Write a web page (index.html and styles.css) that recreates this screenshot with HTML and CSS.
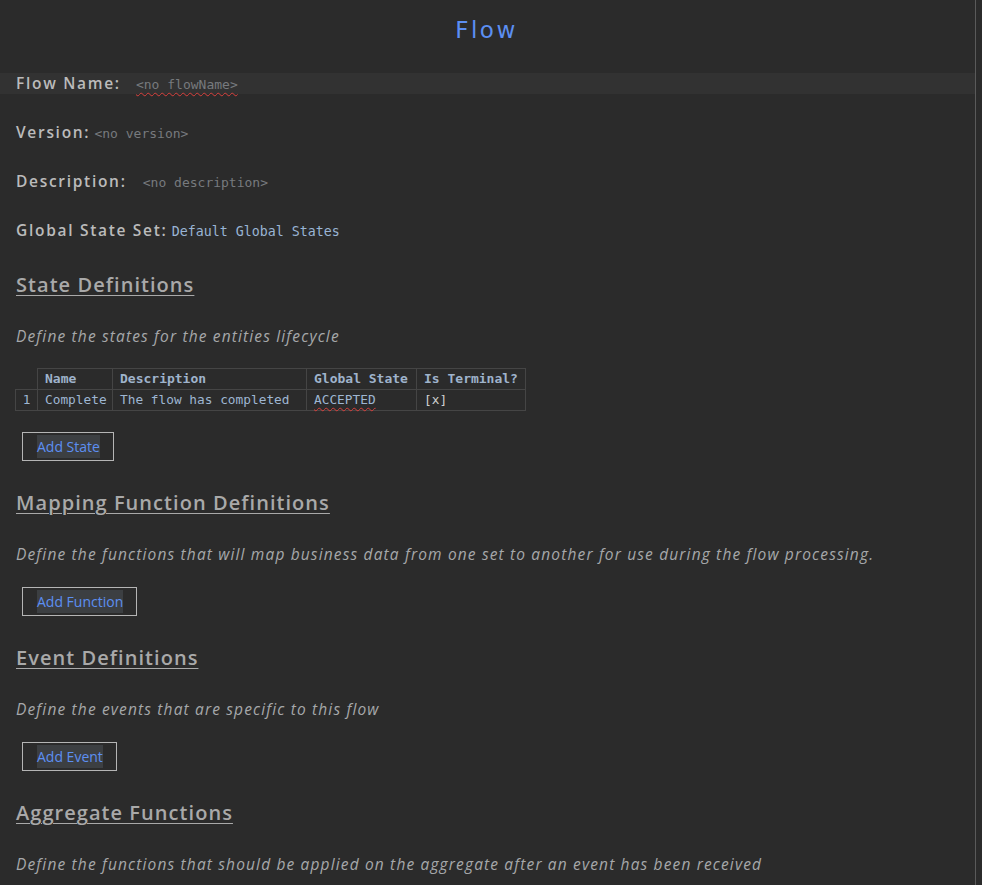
FILE: index.html
```html
<!DOCTYPE html>
<html lang="en">
<head>
    <meta charset="UTF-8">
    <meta name="viewport" content="width=device-width, initial-scale=1.0">
    <title>Flow</title>
    <link rel="stylesheet" href="styles.css">
</head>
<body>
    <div class="editor">
        <h1 class="title">Flow</h1>

        <div class="field field-current">
            <span class="label">Flow Name:</span>
            <span class="value empty misspelt name-value">&lt;no flowName&gt;</span>
        </div>
        <div class="field">
            <span class="label">Version:</span>
            <span class="value empty">&lt;no version&gt;</span>
        </div>
        <div class="field">
            <span class="label">Description:</span>
            <span class="value empty desc-value">&lt;no description&gt;</span>
        </div>
        <div class="field">
            <span class="label">Global State Set:</span>
            <span class="value ref">Default Global States</span>
        </div>

        <div class="section">
            <h2 class="section-title">State Definitions</h2>
            <p class="section-desc">Define the states for the entities lifecycle</p>
            <table class="states">
                <colgroup>
                    <col class="col-num">
                    <col class="col-name">
                    <col class="col-desc">
                    <col class="col-global">
                    <col class="col-terminal">
                </colgroup>
                <thead>
                    <tr>
                        <th class="blank"></th>
                        <th>Name</th>
                        <th>Description</th>
                        <th>Global State</th>
                        <th>Is Terminal?</th>
                    </tr>
                </thead>
                <tbody>
                    <tr>
                        <td class="num">1</td>
                        <td>Complete</td>
                        <td>The flow has completed</td>
                        <td><span class="misspelt">ACCEPTED</span></td>
                        <td class="flag">[x]</td>
                    </tr>
                </tbody>
            </table>
            <button class="add-btn"><span>Add State</span></button>
        </div>

        <div class="section">
            <h2 class="section-title">Mapping Function Definitions</h2>
            <p class="section-desc">Define the functions that will map business data from one set to another for use during the flow processing.</p>
            <button class="add-btn"><span>Add Function</span></button>
        </div>

        <div class="section">
            <h2 class="section-title">Event Definitions</h2>
            <p class="section-desc">Define the events that are specific to this flow</p>
            <button class="add-btn"><span>Add Event</span></button>
        </div>

        <div class="section">
            <h2 class="section-title">Aggregate Functions</h2>
            <p class="section-desc">Define the functions that should be applied on the aggregate after an event has been received</p>
        </div>
    </div>
</body>
</html>
```

FILE: styles.css
```css
body {
    margin: 0;
    background-color: #2b2b2b;
    font-family: "Open Sans", sans-serif;
    color: #bbbbbb;
}

.editor {
    width: 975px;
    min-height: 885px;
    border-right: 1px solid #5a5a5a;
    box-sizing: content-box;
}

.title {
    margin: 0 0 15px 0;
    height: 60px;
    line-height: 60px;
    text-align: center;
    font-family: "DejaVu Sans", sans-serif;
    font-size: 23px;
    font-weight: normal;
    letter-spacing: 2.5px;
    color: #5c8ff2;
    padding-right: 2px;
}

.field {
    height: 21px;
    line-height: 21px;
    padding-left: 16px;
    margin-bottom: 28px;
    white-space: nowrap;
}

.title + .field {
    margin-top: -2px;
}

.field-current {
    background-color: #323232;
}

.label {
    font-size: 15.5px;
    font-weight: 600;
    letter-spacing: 1.7px;
    color: #bbbbbb;
}

.value {
    font-family: "DejaVu Sans Mono", monospace;
    font-size: 13px;
}

.empty {
    color: #777a7e;
}

.name-value {
    margin-left: 11px;
}

.desc-value {
    margin-left: 12px;
}

.ref {
    font-size: 13.3px;
    color: #99b4d4;
}

.misspelt {
    text-decoration: underline wavy #d9403c;
    text-decoration-thickness: 1px;
    text-underline-offset: 3px;
}

.section {
    padding-left: 16px;
    margin-top: 32px;
}

.section + .section {
    margin-top: 30px;
}

.section-title {
    margin: 0;
    height: 24px;
    line-height: 24px;
    font-size: 20px;
    font-weight: 600;
    letter-spacing: 1.05px;
    color: #a9a9a9;
    text-decoration: underline;
    text-decoration-thickness: 1px;
    text-underline-offset: 3px;
}

.section-desc {
    margin: 29px 0 0 0;
    height: 21px;
    line-height: 21px;
    font-size: 15.5px;
    font-style: italic;
    letter-spacing: 1.15px;
    color: #a6a8aa;
    white-space: nowrap;
}

.states {
    margin: 21px 0 0 -1px;
    border-collapse: collapse;
    table-layout: fixed;
    font-family: "DejaVu Sans Mono", monospace;
    font-size: 12.8px;
    color: #9eb6d2;
}

.col-num { width: 22px; }
.col-name { width: 75px; }
.col-desc { width: 194px; }
.col-global { width: 110px; }
.col-terminal { width: 109px; }

.states th,
.states td {
    height: 20px;
    padding: 0 0 0 7px;
    border: 1px solid #454545;
    text-align: left;
    white-space: nowrap;
    line-height: 20px;
}

.states th {
    font-weight: bold;
    font-size: 13px;
    color: #9fb3cb;
}

.states th.blank {
    border: none;
    border-bottom: 1px solid #454545;
}

.states td.num {
    text-align: center;
    padding: 0;
}

.states td.flag {
    color: #cfcfcf;
}

.add-btn {
    display: block;
    margin: 21px 0 0 6px;
    padding: 2px 13px 2px 14px;
    height: 29px;
    background: transparent;
    border: 1px solid #b5b5b5;
    font-family: "Open Sans", sans-serif;
    font-size: 14px;
    color: #5c8ff2;
    cursor: pointer;
}

.add-btn span {
    display: block;
    height: 23px;
    line-height: 24px;
    background-color: #3c3f42;
}

.section-desc + .add-btn {
    margin-top: 22px;
}
```
